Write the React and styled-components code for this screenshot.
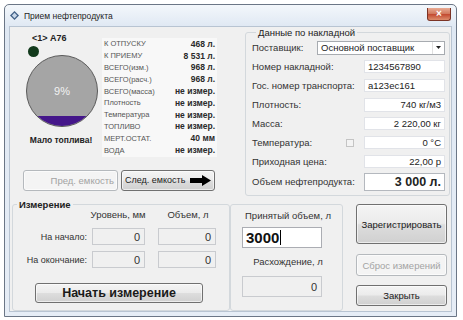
import React from 'react';
import styled, { createGlobalStyle } from 'styled-components';

const GlobalStyle = createGlobalStyle`
  html, body { margin: 0; padding: 0; background: #fff; }
  body { font-family: "Liberation Sans", Arial, sans-serif; color: #222; }
  * { box-sizing: border-box; }
`;

const Window = styled.div`
  margin: 4px 0 0 4px;
  width: 453px;
  height: 313px;
  border: 1px solid #6b7686;
  border-radius: 5px 5px 0 0;
  background: linear-gradient(#f3f7fb, #dfe8f3 22px, #e6edf6);
  display: flex;
  flex-direction: column;
  padding: 0 4px 4px 4px;
`;

const TitleBar = styled.div`
  height: 22px;
  display: flex;
  align-items: center;
  gap: 5px;
  padding-left: 1px;
`;

const TitleText = styled.span`
  font-size: 8.5px;
  color: #1e1e1e;
  flex: 1;
`;

const CloseButton = styled.div`
  align-self: flex-start;
  margin: 3px 1px 0 0;
  width: 24px;
  height: 13px;
  border: 1px solid #7b3325;
  border-top: none;
  border-radius: 0 0 3px 3px;
  background: linear-gradient(#e9ab93, #d0765a 50%, #c2482f 51%, #dc8d6c);
  color: #fff;
  font-size: 10px;
  font-weight: bold;
  line-height: 12px;
  text-align: center;
`;

const Client = styled.div`
  flex: 1;
  background: #f0f0f0;
  border: 1px solid #b8c4d2;
  display: flex;
  flex-direction: column;
`;

const TopSection = styled.div`
  height: 170px;
  display: flex;
`;

const LeftPanel = styled.div`
  width: 235px;
  padding: 6px 0 0 13px;
  display: flex;
  flex-direction: column;
`;

const TankRow = styled.div`
  display: flex;
`;

const TankColumn = styled.div`
  width: 79px;
  display: flex;
  flex-direction: column;
`;

const TankLabel = styled.div`
  font-size: 9px;
  font-weight: bold;
  line-height: 10px;
  padding-left: 9px;
`;

const Dot = styled.div`
  width: 11px;
  height: 11px;
  margin: 3px 0 0 5px;
  border-radius: 50%;
  background: #123a1c;
`;

const Gauge = styled.div`
  position: relative;
  width: 72px;
  height: 72px;
  margin: -2px 0 0 3px;
  border-radius: 50%;
  border: 1px solid #5a5a5a;
  background: #a5a5a5;
  overflow: hidden;
  display: flex;
  align-items: center;
  justify-content: center;
`;

const GaugeFill = styled.div`
  position: absolute;
  left: 0;
  right: 0;
  bottom: 0;
  background: #44168a;
`;

const GaugeText = styled.span`
  position: relative;
  color: #f2f2f2;
  font-size: 11px;
`;

const Warning = styled.div`
  margin-top: 8px;
  width: 76px;
  text-align: center;
  font-size: 8.5px;
  font-weight: bold;
  line-height: 10px;
`;

const InfoTable = styled.div`
  margin-top: 5px;
  width: 115px;
  padding: 0 2px 1px 2px;
  background: #f8f8f8;
`;

const InfoRow = styled.div`
  height: 11.8px;
  display: flex;
  justify-content: space-between;
  align-items: center;
`;

const InfoLabel = styled.span`
  font-size: 7.5px;
  color: #555;
`;

const InfoValue = styled.span`
  font-size: 8.5px;
  font-weight: bold;
  color: #2a2a2a;
`;

const TankButtons = styled.div`
  margin-top: 13px;
  display: flex;
  gap: 3px;
`;

const WinButton = styled.div`
  height: ${p => p.h || 21}px;
  width: ${p => p.w ? p.w + 'px' : 'auto'};
  border: 1px solid ${p => (p.disabled ? '#b5b9bd' : '#707070')};
  border-radius: 3px;
  background: ${p => (p.disabled
    ? '#f4f4f4'
    : 'linear-gradient(#f4f4f4, #ebebeb 48%, #dddddd 52%, #d0d0d0)')};
  color: ${p => (p.disabled ? '#a3a3a3' : '#1a1a1a')};
  font-size: ${p => p.fs || 9.5}px;
  font-weight: ${p => (p.bold ? 'bold' : 'normal')};
  display: flex;
  align-items: center;
  justify-content: ${p => p.justify || 'center'};
  gap: 3px;
  padding: 0 3px;
  white-space: nowrap;
  box-shadow: inset 0 0 0 1px rgba(255, 255, 255, 0.6);
`;

const Group = styled.fieldset`
  margin: 0;
  padding: 0 4px 4px 6px;
  border: 1px solid #d3d8dc;
  border-radius: 3px;
  min-width: 0;
`;

const Legend = styled.legend`
  padding: 0 2px;
  margin-left: 4px;
  font-size: 9.5px;
  line-height: 11px;
  font-weight: ${p => (p.bold ? 'bold' : 'normal')};
  color: #222;
`;

const InvoiceGroup = styled(Group)`
  flex: 1;
  margin-right: 1px;
  height: 169px;
`;

const FormRow = styled.div`
  height: ${p => p.h || 19}px;
  display: flex;
  align-items: center;
`;

const FormLabel = styled.span`
  flex: 1;
  font-size: 9.5px;
  color: #333;
`;

const Field = styled.div`
  width: ${p => p.w || 81}px;
  height: ${p => p.h || 13}px;
  background: #fff;
  border: 1px solid ${p => (p.strong ? '#b4b8be' : '#e1e3e8')};
  font-size: ${p => p.fs || 9.5}px;
  font-weight: ${p => (p.bold ? 'bold' : 'normal')};
  display: flex;
  align-items: center;
  justify-content: ${p => (p.left ? 'flex-start' : 'flex-end')};
  padding: 0 3px;
  color: #222;
  white-space: nowrap;
`;

const Combo = styled.div`
  width: 128px;
  height: 14px;
  background: #fff;
  border: 1px solid #a7abb0;
  display: flex;
  align-items: center;
  font-size: 9.5px;
  padding-left: 3px;
`;

const ComboText = styled.span`
  flex: 1;
`;

const ComboArrow = styled.div`
  width: 12px;
  height: 12px;
  border-left: 1px solid #e0e0e0;
  display: flex;
  align-items: center;
  justify-content: center;
`;

const CheckBox = styled.div`
  width: 8px;
  height: 8px;
  margin-right: 10px;
  border: 1px solid #c4c4c4;
  background: #f3f3f3;
`;

const BottomSection = styled.div`
  flex: 1;
  display: flex;
`;

const MeasureGroup = styled(Group)`
  margin: 2px 0 0 2px;
  width: 218px;
  height: 112px;
  padding: 0;
`;

const MeasureRow = styled.div`
  display: flex;
  align-items: center;
  margin-top: ${p => p.mt || 0}px;
  height: ${p => p.h || 17}px;
`;

const MeasureLabel = styled.span`
  width: 74px;
  text-align: right;
  font-size: 9px;
  color: #333;
`;

const ColHead = styled.span`
  width: ${p => p.w}px;
  margin-left: ${p => p.ml}px;
  text-align: center;
  font-size: 9.5px;
  color: #333;
`;

const ReadBox = styled.div`
  width: ${p => p.w}px;
  height: ${p => p.h || 17}px;
  margin-left: ${p => p.ml || 0}px;
  background: #f0f0f0;
  border: 1px solid #c9cbcf;
  display: flex;
  align-items: center;
  justify-content: flex-end;
  padding-right: 4px;
  font-size: 11px;
  color: #333;
`;

const StartButton = styled(WinButton)`
  margin: 15px 0 0 22px;
`;

const VolumeGroup = styled(Group)`
  margin-top: 7px;
  width: 113px;
  height: 107px;
  padding: 6px 0 0 11px;
`;

const VolumeLabel = styled.div`
  width: 92px;
  text-align: center;
  font-size: 9.5px;
  line-height: 10px;
  color: #333;
  margin-top: ${p => p.mt || 0}px;
`;

const VolumeInput = styled.div`
  width: 80px;
  height: 21px;
  margin-top: 6px;
  background: #fff;
  border: 1px solid #abadb3;
  display: flex;
  align-items: center;
  padding-left: 3px;
  font-size: 15px;
  font-weight: bold;
  color: #111;
`;

const Caret = styled.span`
  width: 1px;
  height: 15px;
  margin-left: 1px;
  background: #000;
`;

const ActionColumn = styled.div`
  margin: 7px 0 0 13px;
  width: 91px;
  display: flex;
  flex-direction: column;
`;

const info = [
  ['К ОТПУСКУ', '468 л.'],
  ['К ПРИЕМУ', '8 531 л.'],
  ['ВСЕГО(изм.)', '968 л.'],
  ['ВСЕГО(расч.)', '968 л.'],
  ['ВСЕГО(масса)', 'не измер.'],
  ['Плотность', 'не измер.'],
  ['Температура', 'не измер.'],
  ['ТОПЛИВО', 'не измер.'],
  ['МЕРТ.ОСТАТ.', '40 мм'],
  ['ВОДА', 'не измер.'],
];

const WindowIcon = () => (
  <svg width="9" height="9" viewBox="0 0 10 10">
    <path d="M5 0 L10 5 L5 10 L0 5 Z" fill="#3f5f86" />
    <path d="M5 2 L8 5 L5 8 L2 5 Z" fill="#c7d6e8" />
  </svg>
);

const ArrowRight = () => (
  <svg width="21" height="11" viewBox="0 0 21 11">
    <path d="M0 3 H12 V0 L21 5.5 L12 11 V8 H0 Z" fill="#000" />
  </svg>
);

export default function App() {
  const level = 15;
  return (
    <>
      <GlobalStyle />
      <Window>
        <TitleBar>
          <WindowIcon />
          <TitleText>Прием нефтепродукта</TitleText>
          <CloseButton>×</CloseButton>
        </TitleBar>
        <Client>
          <TopSection>
            <LeftPanel>
              <TankRow>
                <TankColumn>
                  <TankLabel>&lt;1&gt; А76</TankLabel>
                  <Dot />
                  <Gauge>
                    <GaugeFill style={{ height: level + '%' }} />
                    <GaugeText>9%</GaugeText>
                  </Gauge>
                  <Warning>Мало топлива!</Warning>
                </TankColumn>
                <InfoTable>
                  {info.map(([k, v]) => (
                    <InfoRow key={k}>
                      <InfoLabel>{k}</InfoLabel>
                      <InfoValue>{v}</InfoValue>
                    </InfoRow>
                  ))}
                </InfoTable>
              </TankRow>
              <TankButtons>
                <WinButton w={95} disabled justify="flex-end">Пред. емкость</WinButton>
                <WinButton w={94} fs={9} justify="space-between">
                  <span>След. емкость</span>
                  <ArrowRight />
                </WinButton>
              </TankButtons>
            </LeftPanel>
            <InvoiceGroup>
              <Legend>Данные по накладной</Legend>
              <FormRow>
                <FormLabel>Поставщик:</FormLabel>
                <Combo>
                  <ComboText>Основной поставщик</ComboText>
                  <ComboArrow>
                    <svg width="5" height="3" viewBox="0 0 5 3">
                      <path d="M0 0 H5 L2.5 3 Z" fill="#222" />
                    </svg>
                  </ComboArrow>
                </Combo>
              </FormRow>
              <FormRow>
                <FormLabel>Номер накладной:</FormLabel>
                <Field left>1234567890</Field>
              </FormRow>
              <FormRow>
                <FormLabel>Гос. номер транспорта:</FormLabel>
                <Field left>а123ес161</Field>
              </FormRow>
              <FormRow>
                <FormLabel>Плотность:</FormLabel>
                <Field h={14}>740 кг/м3</Field>
              </FormRow>
              <FormRow>
                <FormLabel>Масса:</FormLabel>
                <Field>2 220,00 кг</Field>
              </FormRow>
              <FormRow>
                <FormLabel>Температура:</FormLabel>
                <CheckBox />
                <Field>0 °C</Field>
              </FormRow>
              <FormRow>
                <FormLabel>Приходная цена:</FormLabel>
                <Field>22,00 р</Field>
              </FormRow>
              <FormRow h={21}>
                <FormLabel>Объем нефтепродукта:</FormLabel>
                <Field h={18} fs={12.5} bold strong>3 000 л.</Field>
              </FormRow>
            </InvoiceGroup>
          </TopSection>
          <BottomSection>
            <MeasureGroup>
              <Legend bold>Измерение</Legend>
              <MeasureRow h={10} mt={-1}>
                <ColHead w={62} ml={74}>Уровень, мм</ColHead>
                <ColHead w={58} ml={10}>Объем, л</ColHead>
              </MeasureRow>
              <MeasureRow mt={9}>
                <MeasureLabel>На начало:</MeasureLabel>
                <ReadBox w={53} ml={5}>0</ReadBox>
                <ReadBox w={58} ml={13}>0</ReadBox>
              </MeasureRow>
              <MeasureRow mt={6}>
                <MeasureLabel>На окончание:</MeasureLabel>
                <ReadBox w={53} ml={5}>0</ReadBox>
                <ReadBox w={58} ml={13}>0</ReadBox>
              </MeasureRow>
              <StartButton w={168} h={20} fs={12.5} bold>Начать измерение</StartButton>
            </MeasureGroup>
            <VolumeGroup>
              <VolumeLabel>Принятый объем, л</VolumeLabel>
              <VolumeInput>3000<Caret /></VolumeInput>
              <VolumeLabel mt={9}>Расхождение, л</VolumeLabel>
              <ReadBox w={80} h={21} style={{ marginTop: 9 }}>0</ReadBox>
            </VolumeGroup>
            <ActionColumn>
              <WinButton h={40}>Зарегистрировать</WinButton>
              <WinButton h={22} disabled style={{ marginTop: 10 }}>Сброс измерений</WinButton>
              <WinButton h={21} style={{ marginTop: 9 }}>Закрыть</WinButton>
            </ActionColumn>
          </BottomSection>
        </Client>
      </Window>
    </>
  );
}
